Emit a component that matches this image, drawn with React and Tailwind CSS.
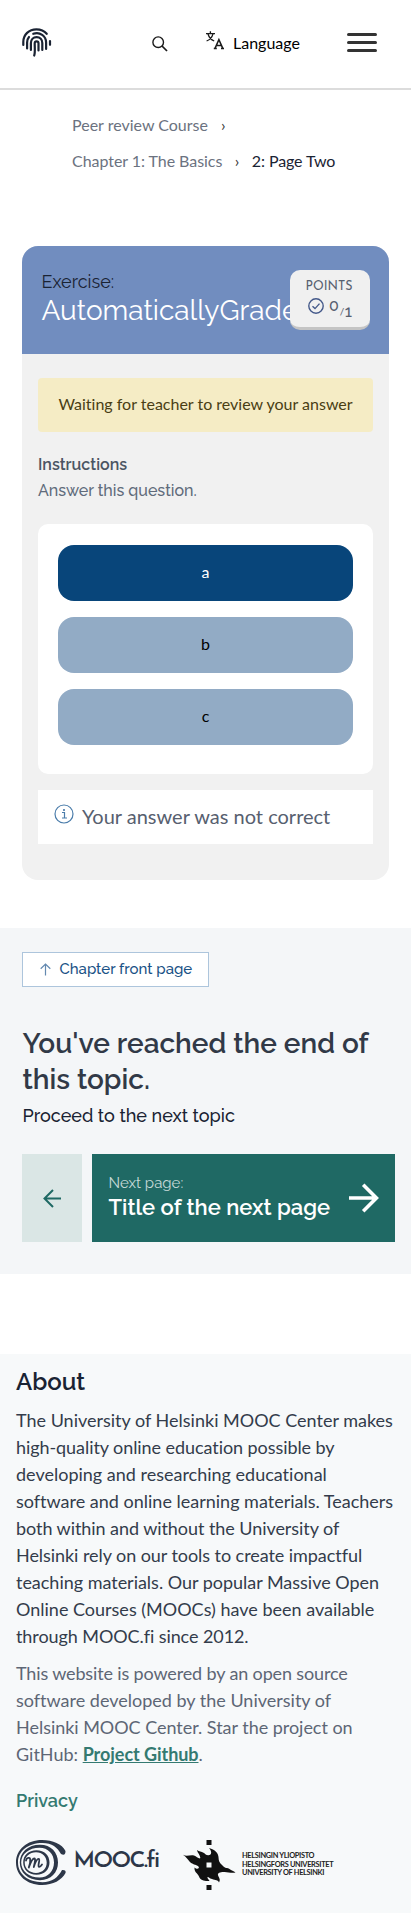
import React from "react";

function Fingerprint() {
  return (
    <svg width="30" height="29" viewBox="0 0 30 29" fill="none" stroke="#1a2333" strokeWidth="2.2" strokeLinecap="round">
      <path d="M1.300 17V14C1.300 6.500 7 1.300 14.400 1.300C18.800 1.300 22.200 2.800 24.700 5.800" />
      <path d="M28 13V16.800" />
      <path d="M5.100 20.500V14.500C5.100 12.300 5.700 10.500 7 9" />
      <path d="M11.300 5.800C18 3.600 24.100 8 24.100 14.500V21" />
      <path d="M8.900 22V15C8.900 11.500 11.300 9.200 14.600 9.200C18 9.200 20.300 11.500 20.300 15V22" />
      <path d="M12.200 27.500C13.300 25 12.700 20 12.700 15.300C12.700 12.700 16.500 12.700 16.500 15.300V22.500" />
    </svg>
  );
}

function LanguageIcon() {
  return (
    <svg width="18" height="19" viewBox="0 0 18 19" fill="none" stroke="#1a1a1a" strokeWidth="1.3">
      <path d="M0 2.6H9M4.4 0.3V2.6M7 2.8C6 6.5 3.6 8.8 0.6 10M1.9 2.8C3 6.4 5.2 8.8 8.2 10" />
      <path d="M9 17.400L12.900 8.600L16.800 17.400M10.400 14.400H15.400M7.800 17.400H10.800M15 17.400H18" strokeWidth="1.500" />
    </svg>
  );
}

function Chevron() {
  return <span className="text-[#333]">›</span>;
}

function MoocLogo() {
  return (
    <svg width="50" height="45" viewBox="0 0 50 45" fill="none" stroke="#2d3748">
      <path fill="#2d3748" stroke="none" d="M49.500 11C46 4 37 0 26 0C11 0 0 9.500 0 22.500C0 35.500 11 45 26 45C37 45 46 40 49.500 33Q50.500 29.500 46 30C42 37.500 36 42.200 26.500 42.200C12 42.200 2 34 2 22.500C2 11 12 3 26.500 3C36 3 41.500 7.500 45 14Q49.500 16.500 49.500 11Z" />
      <path fill="#2d3748" stroke="none" fillRule="evenodd" d="M24 4.800C35 4.800 42 12.500 42 22.500C42 32.500 35 40.200 24 40.200C12 40.200 3.800 32.500 3.800 22.500C3.800 12.500 12 4.800 24 4.800ZM23.500 7.800C13 7.800 5.200 14 5.200 22.500C5.200 31 13 37.600 23.500 37.600C32 37.600 38 31 38 22.500C38 14 32 7.800 23.500 7.800Z" />
      <path fill="#2d3748" stroke="none" fillRule="evenodd" d="M20.500 10.300C28.500 10.300 33.500 15.500 33.500 22.500C33.500 29.500 28.500 34.700 20.500 34.700C12.500 34.700 7.200 29.500 7.200 22.500C7.200 15.500 12.500 10.300 20.500 10.300ZM20 12.200C13.500 12.200 8.700 16.500 8.700 22.500C8.700 28.500 13.500 32.900 20 32.900C26.500 32.900 30.700 28.500 30.700 22.500C30.700 16.500 26.500 12.200 20 12.200Z" />
      <path strokeWidth="1.800" strokeLinecap="round" strokeLinejoin="round" d="M10 20.500C10.500 17.500 14 16.800 14.200 19.500C14.400 22 13.500 26 12.800 27.500C14 24 16 18.500 18.300 18.500C20 18.500 18.500 23.500 17.800 27C19 23 21 18.500 22.800 18.800C24.500 19.300 21.500 25.500 22.800 26.700C23.800 27.300 25 26 26 24.500" />
    </svg>
  );
}

function HelsinkiLogo() {
  return (
    <svg width="53" height="50" viewBox="0 0 53 50">
      <path fill="#111" d="M23.500 0H28.500V5H23.500ZM23.500 45H28.500V50H23.500Z" />
      <path fill="#111" fillRule="evenodd" d="M0 14.800C4 17 7 14.500 11 15.500C13.500 16 14.500 18.500 17 18.500C18.500 17 14.500 13 14 10C16 11.500 18.500 11.500 20.500 12.800C22.500 14 23 15.500 25.500 15.300C29 15 29 11.500 26 8C32 9.500 35.500 13 35.600 18C35.700 22 37.500 23.500 40 26C42 28.500 44.500 27.500 46.500 29C48.500 30.500 50.500 31 52.500 32.500C48 33.500 44 31.500 40.500 32C37 32 34.500 33 35 35C35.500 37.500 38 39 36 42.500C35 39.500 32.500 40.500 29 39C26 38 25.500 36.500 24.500 37C24 38.500 26 39.500 26.500 41C22 41.500 17.500 40.500 16 36.500C14.500 33 11 32 11.500 27.500C14 30 17 28.500 15.500 26.500C13 24.500 9 24.500 6.500 21.500C4.500 19 3.500 17.500 0 14.800ZM23.500 22.500V27.500H28.500V22.500Z" />
    </svg>
  );
}

export default function App() {
  return (
    <div className="flex h-[1913px] w-[411px] flex-col overflow-hidden bg-white font-['Lato',sans-serif] [font-variant-ligatures:none]">
      <header className="flex h-[90px] shrink-0 items-start border-b-2 border-[#dcdcdc] pl-[22px] pt-7">
        <Fingerprint />
        <svg className="ml-[100px] mt-2" width="16" height="16" viewBox="0 0 16 16" fill="none" stroke="#1a1a1a" strokeWidth="1.400">
          <circle cx="6.200" cy="6.200" r="5.300" />
          <path d="M10 10L15 15" strokeWidth="1.700" />
        </svg>
        <div className="ml-[38px] mt-[3px] flex gap-[9px]">
          <LanguageIcon />
          <span className="text-[16px] leading-6 text-black">Language</span>
        </div>
        <div className="ml-[47px] mt-[5px] flex flex-col gap-[5px]">
          <i className="h-[3px] w-[30px] rounded-full bg-[#333]" />
          <i className="h-[3px] w-[30px] rounded-full bg-[#333]" />
          <i className="h-[3px] w-[30px] rounded-full bg-[#333]" />
        </div>
      </header>

      <nav className="flex h-[156px] shrink-0 flex-col pl-[72px] pt-[17px] text-[16px] leading-9 text-[#6b7280]">
        <div className="flex gap-[13px]"><span>Peer review Course</span><Chevron /></div>
        <div className="flex gap-[12.500px]"><span className="tracking-[-0.05px]">Chapter 1: The Basics</span><Chevron /><span className="tracking-[-0.1px] text-[#1a2333]">2: Page Two</span></div>
      </nav>

      <section className="mx-[22px] flex h-[634px] shrink-0 flex-col overflow-hidden rounded-2xl bg-[#f1f1f1]">
        <div className="relative h-[108px] shrink-0 bg-[#718dbf] pl-[19.500px] pt-6">
          <div className="font-['Raleway','Lato',sans-serif] text-[18px] leading-6 text-[#1a2333]">Exercise:</div>
          <div className="font-['Raleway','Lato',sans-serif] text-[28px] leading-[34px] text-white">AutomaticallyGrade</div>
          <div className="absolute right-[19px] top-6 flex h-[60px] w-20 flex-col items-center rounded-[10px] border-b-[3px] border-[#c4c4c4] bg-[#f0f0f0] pt-2 text-[#57606f]">
            <div className="-ml-[2px] font-['Josefin_Sans','Lato',sans-serif] text-[12.500px] leading-[18px]">POINTS</div>
            <div className="flex h-6 items-start gap-[5px]">
              <svg className="mt-[2px]" width="16" height="16" viewBox="0 0 16 16" fill="none" stroke="#44598a" strokeWidth="1.400"><circle cx="8" cy="8" r="7.200" /><path d="M4.500 8.200L7 10.600L11.500 5.600" /></svg>
              <span className="mt-px font-['Raleway','Lato',sans-serif] text-[16px] font-medium leading-[18px]">0</span>
              <span className="-ml-[4px] mt-[9px] text-[10px] leading-3">/</span>
              <span className="-ml-[4.500px] mt-[7px] font-['Raleway','Lato',sans-serif] text-[16px] font-medium leading-[18px]">1</span>
            </div>
          </div>
        </div>
        <div className="flex flex-col px-4 pt-6">
          <div className="flex h-[54px] items-center justify-center rounded bg-[#f5ecc5] pb-0.5 text-[16px] text-[#493e14]">Waiting for teacher to review your answer</div>
          <div className="mt-5 font-['Raleway','Lato',sans-serif] text-[16px] font-semibold leading-[26px] text-[#4b5563]">Instructions</div>
          <div className="font-['Raleway','Lato',sans-serif] text-[16px] font-medium leading-[26px] text-[#606b7b]">Answer this question.</div>
          <div className="mt-5 flex h-[250px] flex-col gap-4 rounded-[10px] bg-white px-5 pt-[21px]">
            <div className="flex h-14 items-center justify-center rounded-2xl bg-[#08457a] pb-0.5 text-[16px] text-white">a</div>
            <div className="flex h-14 items-center justify-center rounded-2xl bg-[#92abc5] pb-0.5 text-[16px] text-black">b</div>
            <div className="flex h-14 items-center justify-center rounded-2xl bg-[#92abc5] pb-0.5 text-[16px] text-black">c</div>
          </div>
          <div className="mt-4 flex h-[54px] bg-white pl-4 pt-3">
            <svg className="mt-0.5" width="20" height="20" viewBox="0 0 20 20" fill="none" stroke="#4a7caa" strokeWidth="1.200"><circle cx="10" cy="10" r="9" /><path d="M8 8.500H10.500V14M8 14H13" /><circle cx="10" cy="6" r=".5" /></svg>
            <span className="ml-2 text-[20px] leading-7 text-[#57606f]">Your answer was not correct</span>
          </div>
        </div>
      </section>

      <section className="mt-12 flex h-[346px] shrink-0 flex-col items-start bg-[#f4f6f8] pl-[22px] pt-6">
        <div className="flex h-[35px] w-[187px] items-center border border-[#adc5dc] bg-white pl-[17px]">
          <svg width="11" height="13" viewBox="0 0 11 13" fill="none" stroke="#6389b0" strokeWidth="1.200"><path d="M5.500 12.500V1M.7 5.700L5.500 1L10.300 5.700" /></svg>
          <span className="ml-[8.500px] font-['Raleway','Lato',sans-serif] text-[15px] font-medium text-[#1a5286]">Chapter front page</span>
        </div>
        <h2 className="ml-[0.500px] mt-[39px] w-[380px] font-['Raleway','Lato',sans-serif] text-[28px] font-semibold leading-9 text-[#313947]">You've reached the end of<br />this topic.</h2>
        <p className="ml-[0.500px] mt-1 font-['Raleway','Lato',sans-serif] text-[18px] font-medium leading-7 text-[#1a2333]">Proceed to the next topic</p>
        <div className="mt-6 flex gap-[10px]">
          <div className="flex h-[88px] w-[60px] items-center justify-center bg-[#dae6e5]">
            <svg width="20" height="20" viewBox="0 0 20 20" fill="none" stroke="#1f6964" strokeWidth="2"><path d="M19 10.500H2M11 2L2.500 10.500L11 19" /></svg>
          </div>
          <div className="flex h-[88px] w-[303px] items-center justify-between bg-[#1f6964] pl-[16.500px] pr-4">
            <div className="pb-0.5">
              <div className="font-['Raleway','Lato',sans-serif] text-[15px] leading-5 text-[#c6dad8]">Next page:</div>
              <div className="font-['Raleway','Lato',sans-serif] text-[22px] font-semibold leading-7 text-white">Title of the next page</div>
            </div>
            <svg width="30" height="30" viewBox="0 0 30 30" fill="none" stroke="white" strokeWidth="3.600"><path d="M0 15H27M14.200 1.800L27.400 15L14.200 28.200" /></svg>
          </div>
        </div>
      </section>

      <footer className="mt-20 flex h-[559px] shrink-0 flex-col bg-[#f7f9fa] pl-4 pt-3">
        <h2 className="font-['Raleway','Lato',sans-serif] text-[24px] font-semibold leading-8 text-[#1a2333]">About</h2>
        <p className="mt-[9px] w-[380px] whitespace-nowrap text-[18px] leading-[27px] text-[#333c4b]">
          The University of Helsinki MOOC Center makes<br />
          <span className="tracking-[-0.07px]">high-quality online education possible by</span><br />
          developing and researching educational<br />
          software and online learning materials. Teachers<br />
          <span className="tracking-[-0.06px]">both within and without the University of</span><br />
          <span className="tracking-[-0.06px]">Helsinki rely on our tools to create impactful</span><br />
          <span className="tracking-[-0.02px]">teaching materials. Our popular Massive Open</span><br />
          Online Courses (MOOCs) have been available<br />
          <span className="tracking-[-0.08px]">through MOOC.fi since 2012.</span>
        </p>
        <p className="mt-[10px] w-[380px] whitespace-nowrap text-[18px] leading-[27px] text-[#5d6675]">
          <span className="tracking-[-0.14px]">This website is powered by an open source</span><br />
          software developed by the University of<br />
          <span className="tracking-[-0.03px]">Helsinki MOOC Center. Star the project on</span><br />
          GitHub: <a className="font-bold tracking-[-0.05px] text-[#347a71] underline">Project Github</a>.
        </p>
        <a className="mt-[19px] font-['Raleway','Lato',sans-serif] text-[18px] font-semibold leading-7 text-[#347a71]">Privacy</a>
        <div className="mt-[25px] flex">
          <MoocLogo />
          <span className="ml-[7.500px] mt-[6px] w-[85.500px] whitespace-nowrap font-['Josefin_Sans','Lato',sans-serif] text-[23px] font-semibold leading-8 tracking-[-1.600px] text-[#2d3748]">MOOC.fi</span>
          <div className="ml-6 flex">
            <HelsinkiLogo />
            <div className="ml-[6px] mt-[12px] whitespace-nowrap text-[7.400px] font-bold leading-[8.500px] tracking-[-0.320px] text-[#222]">
              <div>HELSINGIN YLIOPISTO</div><div>HELSINGFORS UNIVERSITET</div><div>UNIVERSITY OF HELSINKI</div>
            </div>
          </div>
        </div>
      </footer>
    </div>
  );
}
